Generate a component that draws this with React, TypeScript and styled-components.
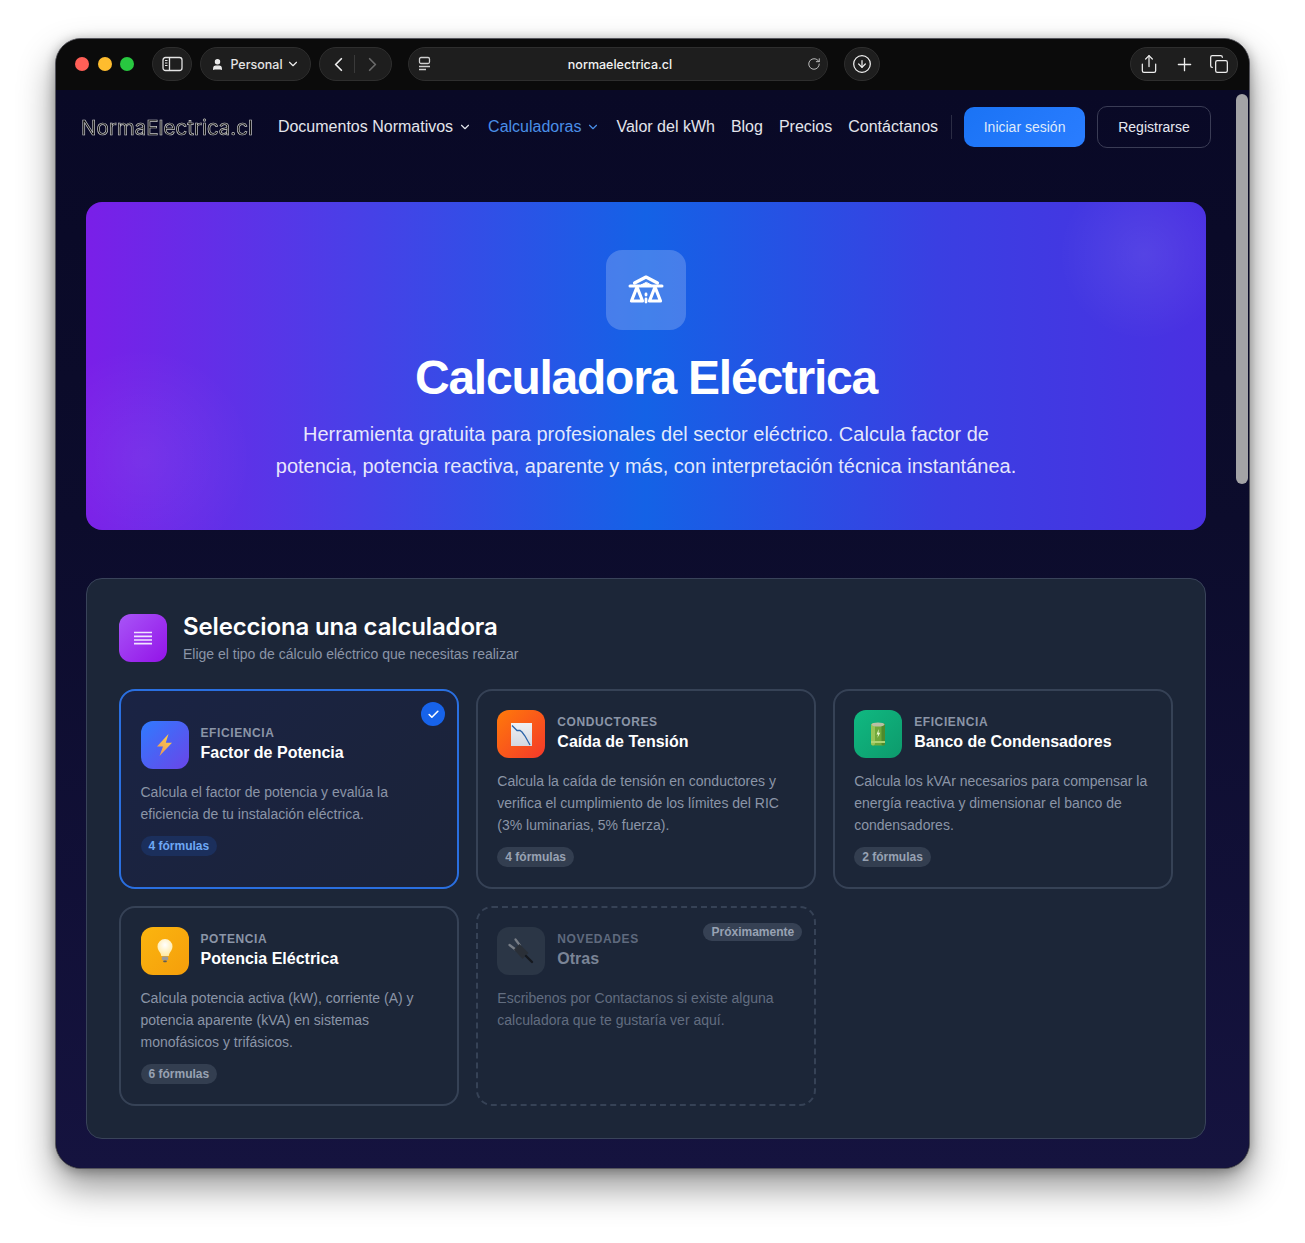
import styled, { createGlobalStyle } from 'styled-components'
import {
  Check,
  ChevronDown,
  ChevronLeft,
  ChevronRight,
  CircleArrowDown,
  Copy,
  Plus,
  RotateCw,
  Share,
  User,
} from 'lucide-react'

const GlobalStyle = createGlobalStyle`
  html, body {
    margin: 0;
    background: #fff;
    font-family: "Liberation Sans", Arial, sans-serif;
  }
  * { box-sizing: border-box; }
`

const Frame = styled.div`
  width: 1305px;
  height: 1243px;
  padding: 38px 55px 74px 55px;
  overflow: hidden;
`

const Window = styled.div`
  height: 1131px;
  border-radius: 26px;
  border: 1px solid #55555c;
  background: #0a0a0a;
  overflow: hidden;
  display: flex;
  flex-direction: column;
  box-shadow: 0 18px 36px rgba(0, 0, 0, 0.42), 0 2px 12px rgba(0, 0, 0, 0.3);
`

const Toolbar = styled.div`
  flex: none;
  height: 51px;
  display: flex;
  align-items: center;
  padding: 0 11px 1px 19px;
  background: #0b0b0b;
  color: #e8e8e8;
`

const Lights = styled.div`
  display: flex;
  gap: 8.5px;
  margin-right: 18px;
`

const Light = styled.span<{ $c: string }>`
  width: 14px;
  height: 14px;
  border-radius: 50%;
  background: ${p => p.$c};
`

const Pill = styled.div<{ $w: number; $ml?: number }>`
  flex: none;
  width: ${p => p.$w}px;
  height: 34px;
  margin-left: ${p => p.$ml ?? 8}px;
  border-radius: 17px;
  background: #1e1e1e;
  border: 1px solid #2e2e2e;
  display: flex;
  align-items: center;
  justify-content: center;
  gap: 3px;
  font-size: 13px;
  font-weight: 500;
  color: #eee;
`

const UrlBar = styled(Pill)`
  justify-content: space-between;
  padding: 0 6px 0 8px;
  margin-left: 16px;
`

const UrlText = styled.span`
  font-family: Inter, sans-serif;
  font-size: 12.5px;
  font-weight: 500;
  color: #f2f2f2;
`

const PersonalText = styled.span`
  font-family: Inter, sans-serif;
  font-size: 12.5px;
  margin-left: 3px;
  color: #e4e4e4;
`

const NavDivider = styled.span`
  width: 1px;
  height: 18px;
  margin: 0 3px 0 1px;
  background: #3a3a3a;
`

const ToolGroup = styled(Pill)`
  margin-left: auto;
  justify-content: space-between;
  padding: 0 8px;
`

const Body = styled.div`
  flex: 1;
  min-height: 0;
  display: flex;
  background: linear-gradient(180deg, #090926 0%, #0c0c2c 40%, #15133f 100%);
`

const Page = styled.div`
  flex: 1;
  min-width: 0;
`

const ScrollTrack = styled.div`
  flex: none;
  width: 15px;
  padding: 4px 1px 0 2px;
`

const ScrollThumb = styled.div`
  height: 390px;
  border-radius: 6px;
  background: #a3a3a6;
`

const Nav = styled.nav`
  height: 74px;
  display: flex;
  align-items: center;
  padding: 0 23px 0 25px;
`

const Logo = styled.div`
  width: 173px;
  margin-right: 24px;
  font-family: Inter, sans-serif;
  font-size: 20.5px;
  white-space: nowrap;
  color: #0b0b28;
  filter: grayscale(1);
  -webkit-text-stroke: 0.7px #c4c6d0;
`

const NavLinks = styled.div`
  display: flex;
  align-items: center;
  gap: 16px;
`

const NavLink = styled.a<{ $active?: boolean }>`
  display: flex;
  align-items: center;
  gap: 5px;
  font-size: 16px;
  white-space: nowrap;
  color: ${p => (p.$active ? '#4a8fe8' : '#e3e5ec')};
`

const NavSeparator = styled.span`
  width: 1px;
  height: 24px;
  margin: 0 12px 0 13px;
  background: #2b2c44;
`

const LoginButton = styled.button`
  width: 121px;
  height: 40px;
  border: 0;
  border-radius: 10px;
  background: linear-gradient(135deg, #1a73f5, #2a7dff);
  color: #dfe9fb;
  font: 14px "Liberation Sans", Arial, sans-serif;
`

const RegisterButton = styled.button`
  width: 114px;
  height: 42px;
  margin-left: 12px;
  border: 1px solid #3a3c55;
  border-radius: 10px;
  background: transparent;
  color: #e6e8f0;
  font: 14px "Liberation Sans", Arial, sans-serif;
`

const Main = styled.main`
  padding: 38px 28px 0 30px;
`

const Hero = styled.section`
  height: 328px;
  padding-top: 48px;
  border-radius: 16px;
  display: flex;
  flex-direction: column;
  align-items: center;
  color: #fff;
  background:
    radial-gradient(circle at 94.500% 16%, rgba(255, 255, 255, 0.08), transparent 85px),
    radial-gradient(circle at 5% 78%, rgba(255, 255, 255, 0.06), transparent 110px),
    linear-gradient(90deg, #7a1fe8 0%, #1462e6 50%, #3a3fe2 76%, #4a30e2 100%);
`

const HeroIcon = styled.div`
  width: 80px;
  height: 80px;
  border-radius: 16px;
  background: rgba(255, 255, 255, 0.2);
  display: flex;
  align-items: center;
  justify-content: center;
  margin-bottom: 19px;
`

const HeroTitle = styled.h1`
  margin: 0 0 11px;
  font-size: 48px;
  line-height: 58px;
  font-weight: 700;
  letter-spacing: -1.25px;
`

const HeroText = styled.p`
  width: 745px;
  margin: 0;
  font-size: 20px;
  line-height: 32px;
  text-align: center;
  color: rgba(255, 255, 255, 0.88);
`

const Panel = styled.section`
  margin-top: 48px;
  padding: 32px;
  border-radius: 16px;
  border: 1px solid #39435a;
  background: #1c2638;
`

const PanelHeader = styled.div`
  height: 54px;
  padding-bottom: 1px;
  margin-bottom: 24px;
  display: flex;
  align-items: center;
  gap: 16px;
`

const PanelIcon = styled.div`
  width: 48px;
  height: 48px;
  border-radius: 12px;
  background: linear-gradient(135deg, #a855f7, #9313e8);
  display: flex;
  align-items: center;
  justify-content: center;
`

const PanelTitle = styled.h2`
  margin: 0 0 1px;
  font-family: Inter, sans-serif;
  font-size: 24px;
  line-height: 32px;
  font-weight: 600;
  letter-spacing: -0.15px;
  color: #fff;
`

const PanelSub = styled.p`
  margin: 0;
  font-size: 14px;
  line-height: 20px;
  color: #8b95a7;
`

const Grid = styled.div`
  display: grid;
  grid-template-columns: repeat(3, 1fr);
  grid-auto-rows: 200px;
  gap: 17px 16.5px;
`

const Card = styled.article<{ $selected?: boolean; $soon?: boolean }>`
  position: relative;
  padding: 19px 19px 20px 19.5px;
  border-radius: 16px;
  border: 2px ${p => (p.$soon ? 'dashed' : 'solid')} ${p => (p.$selected ? '#2a6fe0' : '#364256')};
  background: ${p => (p.$selected ? 'linear-gradient(135deg, #1a2344, #1b2338)' : 'transparent')};
  display: flex;
  flex-direction: column;
  justify-content: ${p => (p.$soon ? 'flex-start' : 'center')};
`

const CardHead = styled.div`
  display: flex;
  align-items: center;
  gap: 12px;
  margin-bottom: 12px;
`

const CardHeadText = styled.div`
  padding-bottom: 2px;
`

const CardIcon = styled.div<{ $bg: string }>`
  flex: none;
  width: 48px;
  height: 48px;
  border-radius: 12px;
  background: ${p => p.$bg};
  display: flex;
  align-items: center;
  justify-content: center;
`

const CardLabel = styled.div<{ $soon?: boolean }>`
  font-size: 12px;
  line-height: 16px;
  margin-bottom: 2px;
  font-weight: 700;
  letter-spacing: 0.6px;
  color: ${p => (p.$soon ? '#5f6a7e' : '#8b95a7')};
`

const CardTitle = styled.div<{ $soon?: boolean }>`
  font-size: 16px;
  line-height: 20px;
  font-weight: 700;
  color: ${p => (p.$soon ? '#7a8496' : '#fff')};
`

const CardText = styled.p<{ $soon?: boolean }>`
  margin: 0;
  font-size: 14px;
  line-height: 22px;
  color: ${p => (p.$soon ? '#626d80' : '#8b95a7')};
`

const Badge = styled.span<{ $selected?: boolean }>`
  align-self: flex-start;
  height: 20px;
  margin-top: 11px;
  padding: 0 8px;
  border-radius: 10px;
  font-size: 12px;
  line-height: 20px;
  font-weight: 700;
  background: ${p => (p.$selected ? '#1b2f5c' : '#333e50')};
  color: ${p => (p.$selected ? '#6ea8f5' : '#98a2b3')};
`

const SoonBadge = styled.span`
  position: absolute;
  top: 15px;
  right: 12px;
  height: 18px;
  padding: 0 8px;
  border-radius: 9px;
  font-size: 12px;
  line-height: 18px;
  font-weight: 700;
  background: #364154;
  color: #98a2b3;
`

const SelectedMark = styled.span`
  position: absolute;
  top: 11px;
  right: 12px;
  width: 24px;
  height: 24px;
  border-radius: 50%;
  background: #1763ea;
  display: flex;
  align-items: center;
  justify-content: center;
  color: #fff;
`

const SidebarIcon = () => (
  <svg width="21" height="16" viewBox="0 0 21 16" fill="none" stroke="#e4e4e4" strokeWidth="1.300">
    <rect x="1" y="1.500" width="19" height="13" rx="2.500" />
    <path d="M7.500 1.500v13" />
    <path d="M3 4.500h2.500M3 7h2.500M3 9.500h2.500" strokeWidth="1" />
  </svg>
)

const ScaleIcon = () => (
  <svg width="36" height="30" viewBox="0 0 36 30" fill="none" stroke="#fff" strokeLinejoin="round" strokeLinecap="round">
    <path d="M6.500 8 18 2l11.500 6" strokeWidth="3.200" />
    <path d="M2 11h32" strokeWidth="3" />
    <path d="M18 7.500 13 10h10z" fill="#fff" strokeWidth="1" />
    <path d="M9 12 3.500 26h11z" strokeWidth="3.200" />
    <path d="M27 12 21.500 26h11z" strokeWidth="3.200" />
    <path d="M18 19v1M18 24v3" strokeWidth="2.800" />
  </svg>
)

const ListIcon = () => (
  <svg width="18" height="14" viewBox="0 0 18 14" fill="none" stroke="#f0e4ff" strokeWidth="1.700">
    <path d="M0 1.500h18M0 5.300h18M0 9h18M0 12.700h18" />
  </svg>
)

const BoltIcon = () => (
  <svg width="17" height="22" viewBox="0 0 17 22">
    <defs>
      <linearGradient id="bolt" x1="0.800" y1="0" x2="0.200" y2="1">
        <stop offset="0" stopColor="#ffd24a" />
        <stop offset="1" stopColor="#e9955a" />
      </linearGradient>
    </defs>
    <path d="M12.500 0 1 12.500h6L3.500 22 16 8.700H9.800z" fill="url(#bolt)" />
  </svg>
)

const ChartDownIcon = () => (
  <svg width="21" height="23" viewBox="0 0 21 23" fill="none">
    <defs>
      <linearGradient id="sheet" x1="0" y1="0" x2="0" y2="1">
        <stop offset="0" stopColor="#eef0f4" />
        <stop offset="1" stopColor="#d4d8e0" />
      </linearGradient>
    </defs>
    <rect width="21" height="23" fill="url(#sheet)" />
    <path d="M1 2.500 6 7.500h3l2 1.500 3 4 5 9" stroke="#2c64a8" strokeWidth="1.300" />
  </svg>
)

const BatteryIcon = () => (
  <svg width="14" height="24" viewBox="0 0 14 24">
    <rect y="1.500" width="14" height="22" rx="2" fill="#6fa83a" />
    <rect y="1.500" width="4" height="22" rx="2" fill="#97c456" />
    <rect x="10.500" y="1.500" width="3.500" height="22" rx="1.500" fill="#4f8a2c" />
    <ellipse cx="7" cy="2.500" rx="6.500" ry="2" fill="#b9bfa5" />
    <rect y="19" width="14" height="2" fill="#aed274" />
    <path d="M7.800 7 5.500 12.500h1.700L6.300 16l3-5.200H7.500z" fill="#e6f5c8" />
  </svg>
)

const BulbIcon = () => (
  <svg width="16" height="24" viewBox="0 0 16 24">
    <defs>
      <radialGradient id="glass" cx="0.500" cy="0.350" r="0.650">
        <stop offset="0" stopColor="#ffffff" />
        <stop offset="1" stopColor="#ffe9a0" />
      </radialGradient>
    </defs>
    <path d="M8 0a7.500 7.500 0 0 0-7.500 7.500c0 3 1.800 4.700 2.800 6.600.6 1.100.8 1.900.9 2.900h7.600c.1-1 .3-1.800.9-2.900 1-1.900 2.800-3.600 2.800-6.600A7.500 7.500 0 0 0 8 0z" fill="url(#glass)" />
    <rect x="4.800" y="17.500" width="6.400" height="3.800" rx="1" fill="#9a9a9a" />
    <rect x="6.200" y="21.500" width="3.600" height="1.800" rx="0.800" fill="#5c5c5c" />
  </svg>
)

const PlugIcon = () => (
  <svg width="26" height="26" viewBox="0 0 26 26" fill="none" opacity="0.8">
    <path d="M1.500 7l6 4.500M7.500 1.500l4.500 6" stroke="#8a8f96" strokeWidth="2.200" strokeLinecap="round" />
    <path d="M6 11.500 11.500 6l9 9-6 6z" fill="#2a2e34" />
    <path d="M18 18l6 6" stroke="#0f1115" strokeWidth="2.400" strokeLinecap="round" />
  </svg>
)

export default function App() {
  return (
    <Frame>
      <GlobalStyle />
      <Window>
        <Toolbar>
          <Lights>
            <Light $c="#ff5f57" />
            <Light $c="#febc2e" />
            <Light $c="#28c840" />
          </Lights>
          <Pill $w={40} $ml={0}>
            <SidebarIcon />
          </Pill>
          <Pill $w={111}>
            <User size={13} fill="#e8e8e8" />
            <PersonalText>Personal</PersonalText>
            <ChevronDown size={14} />
          </Pill>
          <Pill $w={73}>
            <ChevronLeft size={23} strokeWidth={1.800} />
            <NavDivider />
            <ChevronRight size={23} strokeWidth={1.800} color="#6a6a6a" />
          </Pill>
          <UrlBar $w={420}>
            <svg width="16" height="16" viewBox="0 0 16 16" fill="none" stroke="#cfcfcf" strokeWidth="1.300">
              <rect x="2.500" y="1.500" width="10" height="6" rx="1.500" />
              <path d="M2 10.500h11M2 13.500h7" />
            </svg>
            <UrlText>normaelectrica.cl</UrlText>
            <RotateCw size={14} strokeWidth={1.500} color="#cfcfcf" />
          </UrlBar>
          <Pill $w={36} $ml={16}>
            <CircleArrowDown size={20} strokeWidth={1.500} />
          </Pill>
          <ToolGroup $w={108}>
            <Share size={20} strokeWidth={1.500} />
            <Plus size={21} strokeWidth={1.500} />
            <Copy size={20} strokeWidth={1.500} />
          </ToolGroup>
        </Toolbar>
        <Body>
          <Page>
            <Nav>
              <Logo>NormaElectrica.cl</Logo>
              <NavLinks>
                <NavLink>
                  Documentos Normativos <ChevronDown size={14} />
                </NavLink>
                <NavLink $active>
                  Calculadoras <ChevronDown size={14} />
                </NavLink>
                <NavLink>Valor del kWh</NavLink>
                <NavLink>Blog</NavLink>
                <NavLink>Precios</NavLink>
                <NavLink>Contáctanos</NavLink>
              </NavLinks>
              <NavSeparator />
              <LoginButton>Iniciar sesión</LoginButton>
              <RegisterButton>Registrarse</RegisterButton>
            </Nav>
            <Main>
              <Hero>
                <HeroIcon>
                  <ScaleIcon />
                </HeroIcon>
                <HeroTitle>Calculadora Eléctrica</HeroTitle>
                <HeroText>
                  Herramienta gratuita para profesionales del sector eléctrico. Calcula factor de potencia, potencia
                  reactiva, aparente y más, con interpretación técnica instantánea.
                </HeroText>
              </Hero>
              <Panel>
                <PanelHeader>
                  <PanelIcon>
                    <ListIcon />
                  </PanelIcon>
                  <div>
                    <PanelTitle>Selecciona una calculadora</PanelTitle>
                    <PanelSub>Elige el tipo de cálculo eléctrico que necesitas realizar</PanelSub>
                  </div>
                </PanelHeader>
                <Grid>
                  <Card $selected>
                    <SelectedMark>
                      <Check size={13} strokeWidth={3} />
                    </SelectedMark>
                    <CardHead>
                      <CardIcon $bg="linear-gradient(135deg, #2f7bff, #6a45e8)">
                        <BoltIcon />
                      </CardIcon>
                      <CardHeadText>
                        <CardLabel>EFICIENCIA</CardLabel>
                        <CardTitle>Factor de Potencia</CardTitle>
                      </CardHeadText>
                    </CardHead>
                    <CardText>Calcula el factor de potencia y evalúa la eficiencia de tu instalación eléctrica.</CardText>
                    <Badge $selected>4 fórmulas</Badge>
                  </Card>
                  <Card>
                    <CardHead>
                      <CardIcon $bg="linear-gradient(135deg, #ff7a0a, #f4382a)">
                        <ChartDownIcon />
                      </CardIcon>
                      <CardHeadText>
                        <CardLabel>CONDUCTORES</CardLabel>
                        <CardTitle>Caída de Tensión</CardTitle>
                      </CardHeadText>
                    </CardHead>
                    <CardText>
                      Calcula la caída de tensión en conductores y verifica el cumplimiento de los límites del RIC (3%
                      luminarias, 5% fuerza).
                    </CardText>
                    <Badge>4 fórmulas</Badge>
                  </Card>
                  <Card>
                    <CardHead>
                      <CardIcon $bg="linear-gradient(135deg, #10b981, #0d9a6c)">
                        <BatteryIcon />
                      </CardIcon>
                      <CardHeadText>
                        <CardLabel>EFICIENCIA</CardLabel>
                        <CardTitle>Banco de Condensadores</CardTitle>
                      </CardHeadText>
                    </CardHead>
                    <CardText>
                      Calcula los kVAr necesarios para compensar la energía reactiva y dimensionar el banco de
                      condensadores.
                    </CardText>
                    <Badge>2 fórmulas</Badge>
                  </Card>
                  <Card>
                    <CardHead>
                      <CardIcon $bg="linear-gradient(135deg, #fbb50f, #f59e0b)">
                        <BulbIcon />
                      </CardIcon>
                      <CardHeadText>
                        <CardLabel>POTENCIA</CardLabel>
                        <CardTitle>Potencia Eléctrica</CardTitle>
                      </CardHeadText>
                    </CardHead>
                    <CardText>
                      Calcula potencia activa (kW), corriente (A) y potencia aparente (kVA) en sistemas monofásicos y
                      trifásicos.
                    </CardText>
                    <Badge>6 fórmulas</Badge>
                  </Card>
                  <Card $soon>
                    <SoonBadge>Próximamente</SoonBadge>
                    <CardHead>
                      <CardIcon $bg="#2b3646">
                        <PlugIcon />
                      </CardIcon>
                      <CardHeadText>
                        <CardLabel $soon>NOVEDADES</CardLabel>
                        <CardTitle $soon>Otras</CardTitle>
                      </CardHeadText>
                    </CardHead>
                    <CardText $soon>Escribenos por Contactanos si existe alguna calculadora que te gustaría ver aquí.</CardText>
                  </Card>
                </Grid>
              </Panel>
            </Main>
          </Page>
          <ScrollTrack>
            <ScrollThumb />
          </ScrollTrack>
        </Body>
      </Window>
    </Frame>
  )
}
